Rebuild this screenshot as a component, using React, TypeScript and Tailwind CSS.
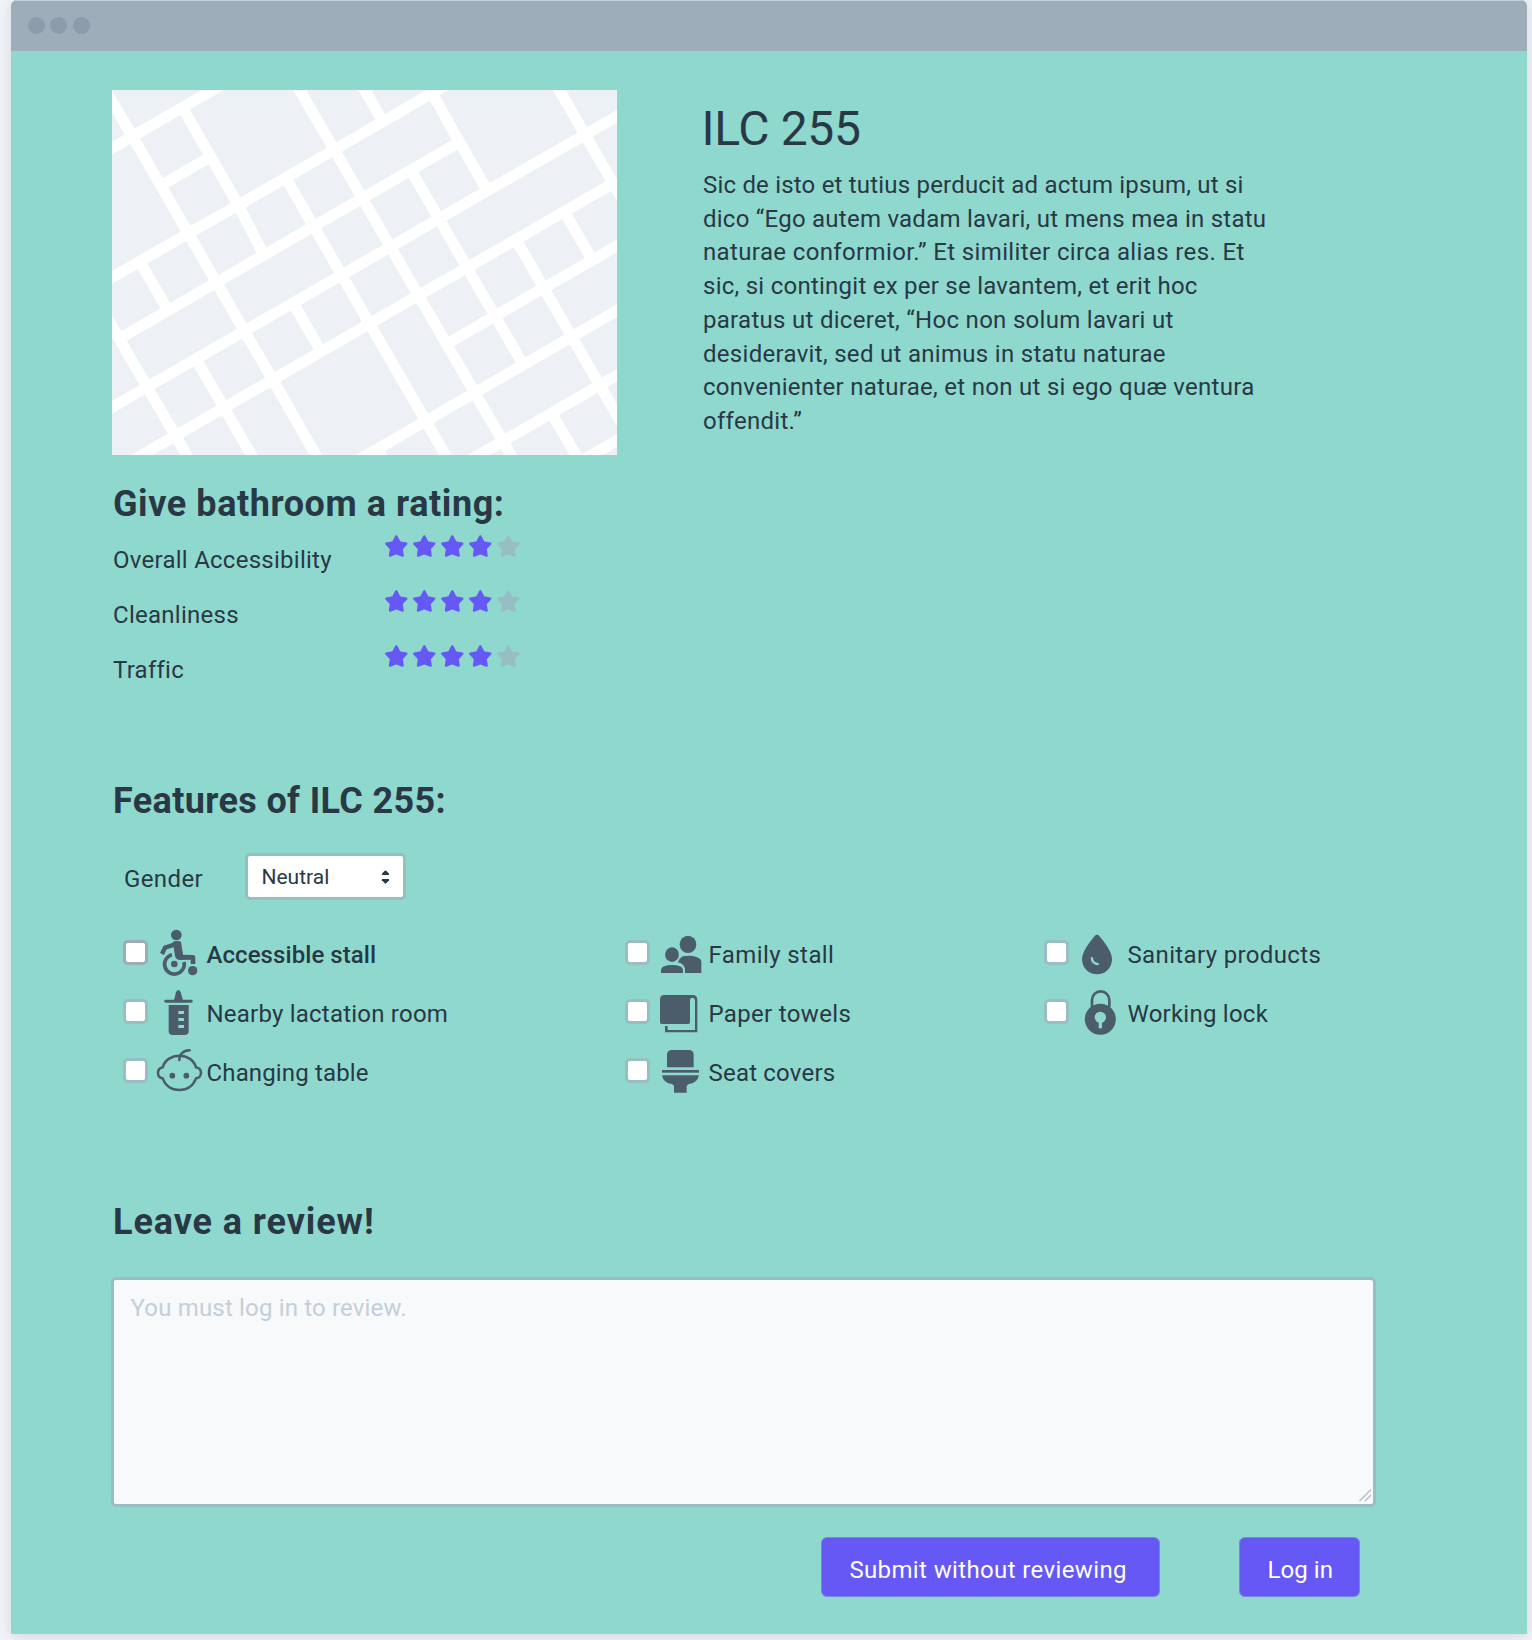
import type { ReactNode } from "react";

const STREETS =
  "M7 222L97 169L369 10 M19 34L97 170L263 462L428 753L511 898L652 1147 M249 91L407 370L482 518 M189 311L318 236 M7 609L263 460L407 377L694 209L1030 12 " +
  "M57 776L346 607L633 439L777 355L1056 191 M19 709L140 921L224 1067L269 1147 M121 550L199 686 M7 999L140 921L428 753L716 585L1004 416L1139 337L1436 164L1560 92 " +
  "M90 1145L224 1067L368 983L511 899L798 731L943 646L1087 563L1520 310 M580 10L694 209L777 355L860 500L943 646L1110 938L1193 1084L1229 1147 " +
  "M551 295L633 439L716 585L798 731L965 1023L1035 1147 M773 10L834 118 M983 38L1050 160L1144 326 M922 273L1004 416L1087 563L1170 708L1249 846 " +
  "M1349 10L1436 164L1544 353 M757 1145L965 1023L1110 938L1253 855L1397 770L1560 675 M1034 788L1170 708L1314 624L1450 545L1560 481 " +
  "M1233 480L1314 624L1397 770L1480 916L1544 1028 M1376 396L1456 537 M1560 869L1480 916L1338 999L1193 1084L1088 1145 M1338 1001L1422 1147 M1560 1064L1422 1145 " +
  "M574 673L654 812 M286 840L368 983L461 1147 M822 1108L838 1136";

function StreetMap() {
  return (
    <svg className="block h-[365px] w-[505px] shrink-0 bg-[#edf0f5]" viewBox="36 30 1495 1095" preserveAspectRatio="none">
      <path d={STREETS} fill="none" stroke="#fff" strokeWidth="33" strokeLinejoin="round" />
    </svg>
  );
}

function Star({ on }: { on: boolean }) {
  return (
    <svg className={on ? "h-[22px] w-[22.6px] text-[#6558f5]" : "h-[22px] w-[22.6px] text-[#97bec3]"} viewBox="0 0 68 66">
      <path
        d="M34 4L43.500 22L64 26L50 41L53 62L34 54.500L15 62L18 41L4 26L24.500 22Z"
        fill="currentColor"
        stroke="currentColor"
        strokeWidth="7"
        strokeLinejoin="round"
      />
    </svg>
  );
}

const RATINGS = [
  { label: "Overall Accessibility", score: 4, tracking: "tracking-[0.26px]" },
  { label: "Cleanliness", score: 4, tracking: "tracking-[0.26px]" },
  { label: "Traffic", score: 4, tracking: "tracking-[0.25px]" },
];

const DESCRIPTION = [
  { text: "Sic de isto et tutius perducit ad actum ipsum, ut si", tracking: "tracking-[0.195px]" },
  { text: "dico “Ego autem vadam lavari, ut mens mea in statu", tracking: "tracking-[0.245px]" },
  { text: "naturae conformior.” Et similiter circa alias res. Et", tracking: "tracking-[0.365px]" },
  { text: "sic, si contingit ex per se lavantem, et erit hoc", tracking: "tracking-[0.25px]" },
  { text: "paratus ut diceret, “Hoc non solum lavari ut", tracking: "tracking-[0.29px]" },
  { text: "desideravit, sed ut animus in statu naturae", tracking: "tracking-[0.3px]" },
  { text: "convenienter naturae, et non ut si ego quæ ventura", tracking: "tracking-[0.29px]" },
  { text: "offendit.”", tracking: "tracking-[0.29px]" },
];

type Feature = { label: string; tracking: string; view: string; icon: ReactNode; active?: boolean };

const FEATURES: Feature[] = [
  {
    label: "Accessible stall",
    tracking: "tracking-[0.07px] font-medium",
    active: true,
    view: "138 24 144 177",
    icon: (
      <>
        <circle cx="199" cy="60" r="16" />
        <path d="M156 117L165 98L198 87" fill="none" stroke="currentColor" strokeWidth="13" strokeLinejoin="round" />
        <path d="M188 80Q200 76 211 79Q214 81 214 86L219 119L250 120Q256 121 256 127V147H242V134L208 135Q197 133 195 122Z" />
        <path d="M186 119A29.500 29.500 0 1 0 222 141" fill="none" stroke="currentColor" strokeWidth="11" />
        <circle cx="193" cy="147" r="10" />
        <circle cx="248" cy="167" r="14" />
      </>
    ),
  },
  {
    label: "Nearby lactation room",
    tracking: "tracking-[0.22px]",
    view: "138 201 144 177",
    icon: (
      <>
        <path d="M192 256L198 232Q205 218 212 232L219 256Z" />
        <rect x="163" y="254" width="85" height="9" rx="4" />
        <path fillRule="evenodd" d="M176 270H236V348Q236 360 224 360H188Q176 360 176 348ZM205 288V297H222V288ZM205 309V318H222V309ZM205 330V339H222V330Z" />
      </>
    ),
  },
  {
    label: "Changing table",
    tracking: "tracking-[0.15px]",
    view: "138 378 144 177",
    icon: (
      <g fill="none" stroke="currentColor" strokeWidth="7.500" strokeLinecap="round">
        <path d="M208 422C232 422 252 436 258 457C268 459 273 466 273 474C273 482 267 489 258 490C250 511 232 525 208 525C184 525 166 511 158 490C149 489 144 482 144 474C144 466 149 459 158 457C164 436 184 422 208 422Z" />
        <path d="M208 435C207 420 218 406 239 406" />
        <circle cx="187" cy="482" r="8.500" fill="currentColor" stroke="none" />
        <circle cx="229" cy="482" r="8.500" fill="currentColor" stroke="none" />
      </g>
    ),
  },
  {
    label: "Family stall",
    tracking: "tracking-[0.41px]",
    view: "144 24 144 177",
    icon: (
      <>
        <ellipse cx="234" cy="88" rx="25" ry="26" />
        <ellipse cx="186" cy="119" rx="20.500" ry="22" />
        <path d="M204 142Q208 130 218 124Q240 120 257 125Q274 130 274 140V174H225V162Q223 147 204 142Z" />
        <path d="M153 174V164Q156 150 186 150Q216 150 219 164V174Z" />
      </>
    ),
  },
  {
    label: "Paper towels",
    tracking: "tracking-[0.33px]",
    view: "144 201 144 177",
    icon: (
      <path d="M163 240H248Q262 240 262 255V352H165V333H173V345H255V256Q254 248 248 248Q240 248 240 256V322Q240 327 235 327H155Q150 327 150 322V254Q150 240 163 240Z" />
    ),
  },
  {
    label: "Seat covers",
    tracking: "tracking-[0.2px]",
    view: "144 378 144 177",
    icon: (
      <>
        <path d="M171 457V420Q171 405 186 405H236Q251 405 251 420V457Z" />
        <rect x="156" y="465" width="111" height="8" />
        <path d="M156 481H267Q262 505 236 507L230 512V533H192V512L186 507Q160 505 156 481Z" />
      </>
    ),
  },
  {
    label: "Sanitary products",
    tracking: "tracking-[0.36px]",
    view: "141 24 144 177",
    icon: (
      <>
        <path d="M194 63Q201 56 208 63C225 84 246 110 246 133A45 45 0 0 1 156 133C156 110 177 84 194 63Z" />
        <path d="M185.500 127C185.500 140 193 147 206 147.500" fill="none" stroke="#8ed8ce" strokeWidth="7" />
      </>
    ),
  },
  {
    label: "Working lock",
    tracking: "tracking-[0.24px]",
    view: "141 201 144 177",
    icon: (
      <>
        <circle cx="211" cy="313" r="46.500" />
        <path d="M186 276V255A26 26 0 0 1 238 255V276" fill="none" stroke="currentColor" strokeWidth="8" />
        <circle cx="211" cy="307" r="17" fill="#8ed8ce" />
        <rect x="206" y="320" width="10" height="20" fill="#8ed8ce" />
      </>
    ),
  },
];

function FeatureRow({ feature }: { feature: Feature }) {
  return (
    <label className="flex h-[59px] items-center">
      <span
        className={
          feature.active
            ? "size-[25px] shrink-0 rounded-[5px] border-[3px] border-[#9dacb9] bg-white"
            : "size-[25px] shrink-0 rounded-[5px] border-[3px] border-[#98bec3] bg-white"
        }
      />
      <svg className="ml-2 h-[59px] w-12 shrink-0 text-[#4b5c6b]" viewBox={feature.view} fill="currentColor">
        {feature.icon}
      </svg>
      <span className={`ml-[2.500px] pt-[5px] leading-[34px] whitespace-nowrap ${feature.tracking}`}>{feature.label}</span>
    </label>
  );
}

export default function App() {
  return (
    <div className="h-[1640px] overflow-hidden bg-[#f0f4f8] font-['Roboto',sans-serif] text-2xl text-[#293845]">
      <div className="ml-[11px] w-[1516px] overflow-hidden rounded-t-md shadow-[0_2px_14px_rgba(0,0,0,0.12)]">
        <header className="flex h-[51px] items-center gap-[5.500px] border-t border-[#c6d0d9] bg-[#9dadb9] pb-px pl-[16.500px]">
          <span className="size-[17px] rounded-full bg-[#8c9cab]" />
          <span className="size-[17px] rounded-full bg-[#8c9cab]" />
          <span className="size-[17px] rounded-full bg-[#8c9cab]" />
        </header>

        <main className="h-[1583px] bg-[#8ed8ce] px-[101px] pt-[39px]">
          <section className="flex">
            <StreetMap />
            <div className="ml-[86px] pt-[11px]">
              <h1 className="-ml-[1.500px] text-[48px] leading-[56px] tracking-[-0.34px]">ILC 255</h1>
              <p className="mt-3">
                {DESCRIPTION.map((line) => (
                  <span key={line.text} className={`block leading-[33.7px] whitespace-nowrap ${line.tracking}`}>
                    {line.text}
                  </span>
                ))}
              </p>
            </div>
          </section>

          <section>
            <h2 className="mt-[29px] ml-px text-4xl leading-10 font-bold tracking-[0.57px]">Give bathroom a rating:</h2>
            {RATINGS.map((rating) => (
              <div key={rating.label} className="flex h-[55px] items-start">
                <span className={`mt-[19px] ml-px w-[272px] leading-[34px] ${rating.tracking}`}>{rating.label}</span>
                <div className="mt-[11px] flex gap-[5.500px]">
                  {[1, 2, 3, 4, 5].map((n) => (
                    <Star key={n} on={n <= rating.score} />
                  ))}
                </div>
              </div>
            ))}
          </section>

          <section>
            <h2 className="mt-[92px] ml-px text-4xl leading-10 font-bold tracking-[0.36px]">Features of ILC 255:</h2>
            <div className="mt-8 ml-3 flex h-[47px] items-start">
              <span className="mt-[9px] w-[121px] leading-[34px] tracking-[0.4px]">Gender</span>
              <div className="flex h-[47px] w-[161px] items-center justify-between rounded-[5px] border-[3px] border-[#98bec3] bg-white pr-[13.500px] pl-[13.500px] text-[21px]">
                <span className="pt-px leading-7">Neutral</span>
                <svg className="h-[14px] w-[9px]" viewBox="0 0 9 14" fill="currentColor">
                  <path d="M4.500 0.500Q5 0.500 5.500 1L8.100 3.700Q8.500 4.900 7.300 5H1.700Q0.500 4.900 0.900 3.700L3.500 1Q4 0.500 4.500 0.500Z" />
                  <path d="M4.500 13.500Q5 13.500 5.500 13L8.100 10.300Q8.500 9.100 7.300 9H1.700Q0.500 9.100 0.900 10.300L3.500 13Q4 13.500 4.500 13.500Z" />
                </svg>
              </div>
            </div>
            <div className="mt-[23px] ml-[11px] grid grid-flow-col grid-cols-[502px_419px_auto] grid-rows-3">
              {FEATURES.map((feature) => (
                <FeatureRow key={feature.label} feature={feature} />
              ))}
            </div>
          </section>

          <section>
            <h2 className="mt-[102px] ml-px text-4xl leading-10 font-bold tracking-[0.91px]">Leave a review!</h2>
            <div className="mt-[35px] -ml-px flex h-[230px] w-[1265px] items-end justify-between rounded-[5px] border-[3px] border-[#98bec3] bg-[#f8f9fb]">
              <p className="self-start pt-[11px] pl-[16.500px] leading-[34px] tracking-[0.17px] text-[#c3cfd9]">You must log in to review.</p>
              <svg className="mr-px mb-0.5 h-[13px] w-[13px]" viewBox="0 0 13 13" fill="none" stroke="#b6c3cd" strokeWidth="1.500">
                <path d="M0.500 12L12 0.500M6 12L12 6" />
              </svg>
            </div>
            <div className="mt-[30px] flex gap-[79px] pl-[709.400px] text-white">
              <button className="h-[60px] w-[339px] rounded-md border border-[#7b84e6] bg-[#6558f5] pt-[5px] pl-[27px] text-left tracking-[0.37px]">
                Submit without reviewing
              </button>
              <button className="h-[60px] w-[121px] rounded-md border border-[#7b84e6] bg-[#6558f5] pt-[5px] pl-[27px] text-left tracking-[0.1px]">
                Log in
              </button>
            </div>
          </section>
        </main>
      </div>
    </div>
  );
}
